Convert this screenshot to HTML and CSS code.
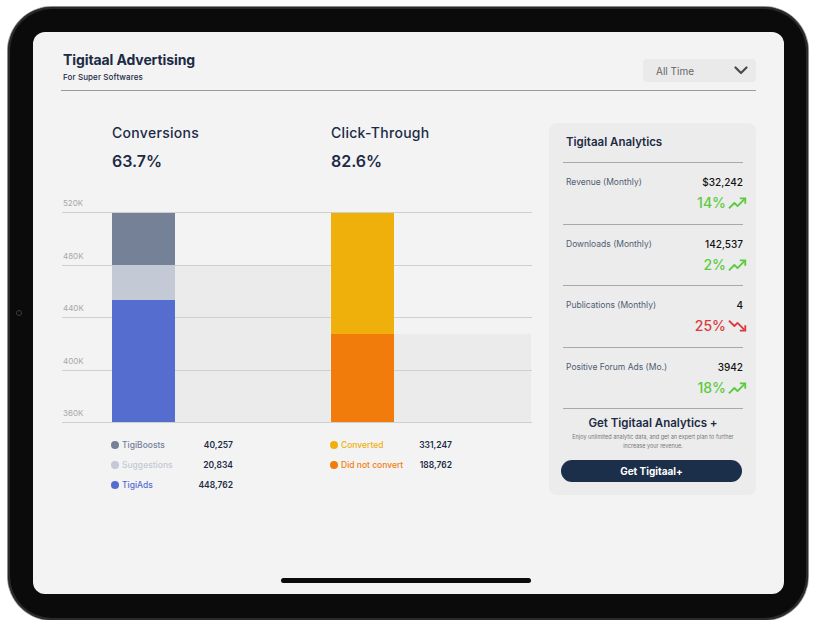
FILE: index.html
```html
<!DOCTYPE html>
<html lang="en">
<head>
    <meta charset="UTF-8">
    <meta name="viewport" content="width=device-width, initial-scale=1.0">
    <title>Tigitaal Advertising</title>
    <link rel="stylesheet" href="styles.css">
</head>
<body>

<div class="device">
    <span class="camera"></span>
    <div class="screen">

        <header class="top">
            <div class="brand">
                <h1>Tigitaal Advertising</h1>
                <p>For Super Softwares</p>
            </div>
            <div class="range">
                <span>All Time</span>
                <svg width="14" height="9" viewBox="0 0 14 9"><polyline points="1.5,1.5 7,7 12.5,1.5" fill="none" stroke="#4a4a4a" stroke-width="2.2" stroke-linecap="round" stroke-linejoin="round"/></svg>
            </div>
        </header>

        <main class="dash">
            <section class="charts">
                <div class="heads">
                    <div class="metric c1">
                        <h2>Conversions</h2>
                        <strong>63.7%</strong>
                    </div>
                    <div class="metric c2">
                        <h2>Click-Through</h2>
                        <strong>82.6%</strong>
                    </div>
                </div>

                <div class="plot">
                    <div class="layer shades">
                        <div class="col c1"><div class="shade" style="width:155px;height:157px"></div></div>
                        <div class="col c2"><div class="shade" style="width:137px;height:88px"></div></div>
                    </div>
                    <div class="axis">
                        <div class="tick"><span>520K</span></div>
                        <div class="tick"><span>480K</span></div>
                        <div class="tick"><span>440K</span></div>
                        <div class="tick"><span>400K</span></div>
                        <div class="tick"><span>360K</span></div>
                    </div>
                    <div class="layer bars">
                        <div class="col c1">
                            <div class="bar">
                                <div class="seg boosts" style="height:52px"></div>
                                <div class="seg suggest" style="height:35px"></div>
                                <div class="seg ads" style="height:122px"></div>
                            </div>
                        </div>
                        <div class="col c2">
                            <div class="bar">
                                <div class="seg conv" style="height:121px"></div>
                                <div class="seg noconv" style="height:88px"></div>
                            </div>
                        </div>
                    </div>
                </div>

                <div class="legends">
                    <ul class="legend c1">
                        <li class="boosts"><i></i><span>TigiBoosts</span><b>40,257</b></li>
                        <li class="suggest"><i></i><span>Suggestions</span><b>20,834</b></li>
                        <li class="ads"><i></i><span>TigiAds</span><b>448,762</b></li>
                    </ul>
                    <ul class="legend c2">
                        <li class="conv"><i></i><span>Converted</span><b>331,247</b></li>
                        <li class="noconv"><i></i><span>Did not convert</span><b>188,762</b></li>
                    </ul>
                </div>
            </section>

            <aside class="panel">
                <h3>Tigitaal Analytics</h3>

                <div class="stat">
                    <div class="stat-line"><span>Revenue (Monthly)</span><b>$32,242</b></div>
                    <div class="trend up">14%
                        <svg width="19" height="14" viewBox="0 0 24 18"><polyline points="1,16 8,9 12,13 21,4" fill="none" stroke="currentColor" stroke-width="2.4" stroke-linejoin="round"/><polyline points="15,3 22,3 22,10" fill="none" stroke="currentColor" stroke-width="2.4"/></svg>
                    </div>
                </div>

                <div class="stat">
                    <div class="stat-line"><span>Downloads (Monthly)</span><b>142,537</b></div>
                    <div class="trend up">2%
                        <svg width="19" height="14" viewBox="0 0 24 18"><polyline points="1,16 8,9 12,13 21,4" fill="none" stroke="currentColor" stroke-width="2.4" stroke-linejoin="round"/><polyline points="15,3 22,3 22,10" fill="none" stroke="currentColor" stroke-width="2.4"/></svg>
                    </div>
                </div>

                <div class="stat">
                    <div class="stat-line"><span>Publications (Monthly)</span><b>4</b></div>
                    <div class="trend down">25%
                        <svg width="19" height="14" viewBox="0 0 24 18"><polyline points="1,2 8,9 12,5 21,14" fill="none" stroke="currentColor" stroke-width="2.4" stroke-linejoin="round"/><polyline points="22,8 22,15 15,15" fill="none" stroke="currentColor" stroke-width="2.4"/></svg>
                    </div>
                </div>

                <div class="stat">
                    <div class="stat-line"><span>Positive Forum Ads (Mo.)</span><b>3942</b></div>
                    <div class="trend up">18%
                        <svg width="19" height="14" viewBox="0 0 24 18"><polyline points="1,16 8,9 12,13 21,4" fill="none" stroke="currentColor" stroke-width="2.4" stroke-linejoin="round"/><polyline points="15,3 22,3 22,10" fill="none" stroke="currentColor" stroke-width="2.4"/></svg>
                    </div>
                </div>

                <div class="promo">
                    <h4>Get Tigitaal Analytics +</h4>
                    <p>Enjoy unlimited analytic data, and get an expert plan to further increase your revenue.</p>
                    <button class="cta">Get Tigitaal+</button>
                </div>
            </aside>
        </main>

        <div class="home-bar"></div>
    </div>
</div>

</body>
</html>
```

FILE: styles.css
```css
* {
    box-sizing: border-box;
    margin: 0;
    padding: 0;
}

body {
    background: #ffffff;
    font-family: 'Inter', 'Noto Sans', sans-serif;
    color: #1c2b45;
    padding: 7px 0 0 8px;
}

/* tablet frame */

.device {
    position: relative;
    width: 800px;
    height: 613px;
    padding: 25px 24px 26px 25px;
    background: #0b0b0b;
    border-radius: 44px;
    box-shadow: 0 0 0 1px #8d8d8d, inset 0 0 0 2px #2a2a2a;
}

.camera {
    position: absolute;
    left: 8px;
    top: 303px;
    width: 6px;
    height: 6px;
    border-radius: 50%;
    background: #0b0b0b;
    border: 1.5px solid #3c3c3c;
}

.screen {
    height: 100%;
    background: #f3f3f3;
    border-radius: 12px;
    padding: 18px 28px 0 28px;
    display: flex;
    flex-direction: column;
}

/* header */

.top {
    display: flex;
    justify-content: space-between;
    align-items: flex-start;
    padding-bottom: 8px;
    border-bottom: 1.5px solid #9a9a9a;
}

.brand {
    padding-left: 2px;
}

.brand h1 {
    font-size: 14px;
    line-height: 20px;
    font-weight: 700;
    letter-spacing: -0.1px;
}

.brand p {
    font-size: 8px;
    line-height: 10px;
    margin-top: 2px;
    font-weight: 500;
    letter-spacing: 0.1px;
}

.range {
    margin-top: 9px;
    width: 113px;
    height: 23px;
    background: #eaeaea;
    border-radius: 4px;
    display: flex;
    align-items: center;
    justify-content: space-between;
    padding: 0 8px 0 13px;
    font-size: 10px;
    color: #666;
}

/* main */

.dash {
    display: flex;
    justify-content: space-between;
    padding-top: 32px;
}

.charts {
    width: 470px;
    margin-left: 1px;
}

.c1 {
    width: 219px;
}

.c2 {
    width: 201px;
}

.heads {
    display: flex;
    padding-left: 50px;
}

.metric h2 {
    font-size: 14px;
    line-height: 18px;
    font-weight: 500;
    letter-spacing: 0.3px;
    padding-top: 1px;
}

.metric strong {
    display: block;
    margin-top: 9px;
    font-size: 16px;
    line-height: 20px;
    font-weight: 600;
}

.plot {
    display: grid;
    margin-top: 27px;
}

.plot > * {
    grid-area: 1 / 1;
}

.layer {
    display: flex;
    align-items: flex-end;
    padding-left: 50px;
    padding-bottom: 1.5px;
}

.col {
    display: flex;
    align-items: flex-end;
}

.shade {
    margin-left: 63px;
    background: #ebebeb;
}

.axis {
    display: flex;
    flex-direction: column;
    gap: 37.5px;
}

.tick {
    border-bottom: 1.5px solid #cfcfcf;
    padding-bottom: 4px;
}

.tick span {
    display: block;
    font-size: 8px;
    line-height: 10px;
    color: #a8a8a8;
    padding-left: 1px;
}

.bar {
    width: 63px;
    display: flex;
    flex-direction: column;
}

.seg.boosts { background: #758197; }
.seg.suggest { background: #c3c9d5; }
.seg.ads { background: #566dd0; }
.seg.conv { background: #f0b00c; }
.seg.noconv { background: #f27c0b; }

/* legends */

.legends {
    display: flex;
    padding-left: 49px;
    margin-top: 12px;
}

.legend {
    list-style: none;
}

.legend li {
    width: 122px;
    height: 20px;
    display: flex;
    align-items: center;
    font-size: 8.5px;
    font-weight: 500;
}

.legend i {
    width: 8px;
    height: 8px;
    border-radius: 50%;
    margin-right: 3px;
}

.legend span {
    flex: 1;
}

.legend b {
    color: #1c2b45;
    font-weight: 600;
}

.legend .boosts { color: #758197; }
.legend .suggest { color: #c3c9d5; }
.legend .ads { color: #566dd0; }
.legend .conv { color: #f0b00c; }
.legend .noconv { color: #f27c0b; }

.legend .boosts i { background: #758197; }
.legend .suggest i { background: #c3c9d5; }
.legend .ads i { background: #566dd0; }
.legend .conv i { background: #f0b00c; }
.legend .noconv i { background: #f27c0b; }

/* analytics panel */

.panel {
    width: 207px;
    background: #ececec;
    border-radius: 8px;
    padding: 0 13px 11px 14px;
}

.panel h3 {
    font-size: 11.5px;
    line-height: 18px;
    font-weight: 600;
    padding: 10px 0 11px 3px;
    border-bottom: 1.5px solid #a9a9a9;
}

.stat {
    height: 61.5px;
    padding: 12px 0 0 3px;
    border-bottom: 1.5px solid #a9a9a9;
}

.stat-line {
    display: flex;
    justify-content: space-between;
    align-items: center;
    height: 14px;
}

.stat-line span {
    font-size: 8.5px;
    color: #4f5d72;
}

.stat-line b {
    font-size: 10px;
    font-weight: 500;
    color: #111;
}

.trend {
    display: flex;
    justify-content: flex-end;
    align-items: center;
    gap: 2px;
    margin-top: 6px;
    margin-right: -4px;
    font-size: 14px;
    line-height: 16px;
    font-weight: 500;
}

.trend.up { color: #5bcb3b; }
.trend.down { color: #d93a40; }

.promo {
    text-align: center;
    padding-top: 6px;
}

.promo h4 {
    font-size: 11.5px;
    line-height: 16px;
    font-weight: 600;
}

.promo p {
    font-size: 5.5px;
    line-height: 9px;
    color: #777;
    margin-top: 2px;
    padding: 0 2px;
}

.cta {
    display: block;
    width: 181px;
    height: 22px;
    margin: 9px 0 0 -2px;
    border: none;
    border-radius: 11px;
    background: #1b2e4a;
    color: #fff;
    font-family: inherit;
    font-size: 10px;
    font-weight: 700;
}

.home-bar {
    width: 250px;
    height: 5px;
    border-radius: 3px;
    background: #0b0b0b;
    margin: auto 0 11px 220px;
}
```
